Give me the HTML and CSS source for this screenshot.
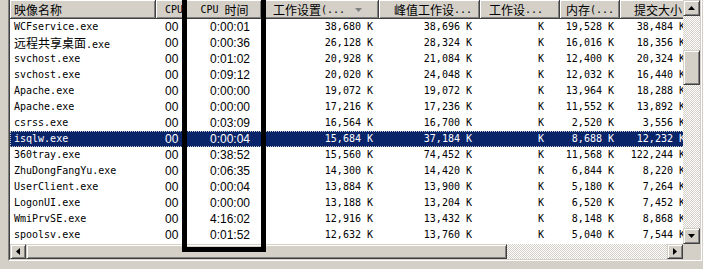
FILE: index.html
```html
<!DOCTYPE html>
<html>
<head>
<meta charset="utf-8">
<link rel="stylesheet" href="styles.css">
</head>
<body>
<div class="frame">
  <div class="inner">
    <div class="list">
      <div class="hdr">
        <div class="h">映像名称</div>
        <div class="h"><span class="m">CPU</span></div>
        <div class="h"><span class="m">CPU&nbsp;</span>时间</div>
        <div class="h">工作设置<span class="m">(...</span><svg class="sort" width="7" height="4" viewBox="0 0 7 4"><polygon points="0,0 7,0 3.5,4" fill="#808080"/></svg></div>
        <div class="h">峰值工作设<span class="m">...</span></div>
        <div class="h">工作设<span class="m">...</span></div>
        <div class="h">内存<span class="m">(...</span></div>
        <div class="h">提交大小</div>
      </div>
      <div class="row"><div>WCFservice.exe</div><div>00</div><div>0:00:01</div><div>38,680 K</div><div>38,696 K</div><div>K</div><div>19,528 K</div><div>38,484 K</div></div>
      <div class="row"><div><span class="cjk">远程共享桌面</span>.exe</div><div>00</div><div>0:00:36</div><div>26,128 K</div><div>28,324 K</div><div>K</div><div>16,016 K</div><div>18,356 K</div></div>
      <div class="row"><div>svchost.exe</div><div>00</div><div>0:01:02</div><div>20,928 K</div><div>21,084 K</div><div>K</div><div>12,400 K</div><div>20,324 K</div></div>
      <div class="row"><div>svchost.exe</div><div>00</div><div>0:09:12</div><div>20,020 K</div><div>24,048 K</div><div>K</div><div>12,032 K</div><div>16,440 K</div></div>
      <div class="row"><div>Apache.exe</div><div>00</div><div>0:00:00</div><div>19,072 K</div><div>19,072 K</div><div>K</div><div>13,964 K</div><div>18,288 K</div></div>
      <div class="row"><div>Apache.exe</div><div>00</div><div>0:00:00</div><div>17,216 K</div><div>17,236 K</div><div>K</div><div>11,552 K</div><div>13,892 K</div></div>
      <div class="row"><div>csrss.exe</div><div>00</div><div>0:03:09</div><div>16,564 K</div><div>16,700 K</div><div>K</div><div>2,520 K</div><div>3,556 K</div></div>
      <div class="row sel"><div>isqlw.exe</div><div>00</div><div>0:00:04</div><div>15,684 K</div><div>37,184 K</div><div>K</div><div>8,688 K</div><div>12,232 K</div></div>
      <div class="row"><div>360tray.exe</div><div>00</div><div>0:38:52</div><div>15,560 K</div><div>74,452 K</div><div>K</div><div>11,568 K</div><div>122,244 K</div></div>
      <div class="row"><div>ZhuDongFangYu.exe</div><div>00</div><div>0:06:35</div><div>14,300 K</div><div>14,420 K</div><div>K</div><div>6,844 K</div><div>8,220 K</div></div>
      <div class="row"><div>UserClient.exe</div><div>00</div><div>0:00:04</div><div>13,884 K</div><div>13,900 K</div><div>K</div><div>5,180 K</div><div>7,264 K</div></div>
      <div class="row"><div>LogonUI.exe</div><div>00</div><div>0:00:00</div><div>13,188 K</div><div>13,204 K</div><div>K</div><div>6,520 K</div><div>7,452 K</div></div>
      <div class="row"><div>WmiPrvSE.exe</div><div>00</div><div>4:16:02</div><div>12,916 K</div><div>13,432 K</div><div>K</div><div>8,148 K</div><div>8,868 K</div></div>
      <div class="row"><div>spoolsv.exe</div><div>00</div><div>0:01:52</div><div>12,632 K</div><div>13,760 K</div><div>K</div><div>5,040 K</div><div>7,544 K</div></div>
    </div>
    <div class="vscroll">
      <div class="btn vbtn"><svg width="7" height="4" viewBox="0 0 7 4"><polygon points="3.5,0 7,4 0,4" fill="#000"/></svg></div>
      <div class="vtrack"><div class="thumb vthumb"></div></div>
      <div class="btn vbtn"><svg width="7" height="4" viewBox="0 0 7 4"><polygon points="0,0 7,0 3.5,4" fill="#000"/></svg></div>
    </div>
    <div class="hscroll">
      <div class="btn hbtn"><svg width="4" height="7" viewBox="0 0 4 7"><polygon points="4,0 4,7 0,3.5" fill="#000"/></svg></div>
      <div class="htrack"><div class="thumb hthumb"></div></div>
      <div class="btn hbtn"><svg width="4" height="7" viewBox="0 0 4 7"><polygon points="0,0 4,3.5 0,7" fill="#000"/></svg></div>
    </div>
    <div class="corner"></div>
  </div>
</div>
<div class="annot"></div>
</body>
</html>
```

FILE: styles.css
```css
html, body {
  margin: 0;
  padding: 0;
}
body {
  background: #d4d0c8;
  width: 703px;
  height: 269px;
  overflow: hidden;
  position: relative;
  font-family: "DejaVu Sans Mono", "Noto Sans CJK SC", monospace;
  font-size: 10px;
  color: #000;
}
.frame {
  margin-left: 8px;
  width: 694px;
  box-sizing: border-box;
  border-left: 1px solid #808080;
  border-right: 1px solid #ffffff;
  border-bottom: 1px solid #ffffff;
}
.inner {
  border-left: 1px solid #404040;
  border-right: 1px solid #d4d0c8;
  border-bottom: 1px solid #d4d0c8;
  display: grid;
  grid-template-columns: 673px 17px;
  grid-template-rows: 244px 15px;
  background: #fff;
}
.list {
  overflow: hidden;
  background: #fff;
}
.hdr, .row {
  display: grid;
  grid-template-columns: 146px 28px 78px 117px 101px 80px 60px 71px;
  width: 681px;
}
.hdr {
  height: 19px;
}
.h {
  box-sizing: border-box;
  height: 19px;
  padding-top: 2px;
  background: #d4d0c8;
  border-right: 1px solid #404040;
  border-bottom: 1px solid #404040;
  box-shadow: inset 1px 1px #ffffff, inset -1px -1px #808080;
  font-family: "Noto Sans CJK SC", sans-serif;
  font-size: 12px;
  line-height: 16px;
  white-space: nowrap;
  overflow: hidden;
  display: flex;
  align-items: center;
  justify-content: flex-end;
}
.h .m {
  font-family: "DejaVu Sans Mono", monospace;
  font-size: 10px;
}
.hdr > :nth-child(1) { justify-content: flex-start; padding-left: 4px; }
.hdr > :nth-child(2) { justify-content: flex-start; padding-left: 9px; }
.hdr > :nth-child(3) { justify-content: center; padding-left: 4px; }
.hdr > :nth-child(4) { padding-right: 16px; }
.hdr > :nth-child(5) { padding-right: 7px; }
.hdr > :nth-child(6) { padding-right: 16px; }
.hdr > :nth-child(7) { padding-right: 5px; }
.hdr > :nth-child(8) { padding-right: 8px; }
.sort {
  margin-left: 10px;
}
.row {
  height: 16px;
  line-height: 16px;
}
.row > div {
  white-space: nowrap;
  overflow: hidden;
  text-align: right;
}
.row .cjk {
  font-family: "Noto Sans CJK SC", sans-serif;
  font-size: 12px;
}
.row > :nth-child(1) { text-align: left; padding-left: 4px; }
.row > :nth-child(2) { text-align: left; padding-left: 9px; font-family: "Liberation Sans", sans-serif; font-size: 12px; }
.row > :nth-child(3) { padding-right: 12px; font-family: "Liberation Sans", sans-serif; font-size: 12px; }
.row > :nth-child(4) { padding-right: 6px; }
.row > :nth-child(5) { padding-right: 8px; }
.row > :nth-child(6) { padding-right: 16px; }
.row > :nth-child(7) { padding-right: 6px; }
.row > :nth-child(8) { padding-right: 6px; }
.row.sel {
  background: #0a246a;
  color: #fff;
  outline: 1px dotted #c8c8c8;
  outline-offset: -1px;
}
.btn, .thumb {
  box-sizing: border-box;
  background: #d4d0c8;
  border: 1px solid;
  border-color: #d4d0c8 #404040 #404040 #d4d0c8;
  box-shadow: inset 1px 1px #ffffff, inset -1px -1px #808080;
}
.btn {
  display: flex;
  align-items: center;
  justify-content: center;
}
.btn svg {
  display: block;
}
.vscroll {
  display: flex;
  flex-direction: column;
}
.vbtn {
  height: 16px;
}
.vtrack, .htrack {
  background: repeating-conic-gradient(#ffffff 0 25%, #d4d0c8 0 50%) 0 0 / 2px 2px;
}
.vtrack {
  flex: 1;
  padding-top: 34px;
}
.vthumb {
  height: 35px;
}
.hscroll {
  display: flex;
}
.hbtn {
  width: 16px;
}
.htrack {
  flex: 1;
  display: flex;
}
.hthumb {
  width: 481px;
}
.corner {
  background: #d4d0c8;
}
.annot {
  position: absolute;
  left: 182px;
  top: -10px;
  width: 84px;
  height: 262px;
  box-sizing: border-box;
  border: 5px solid #000;
}
```
